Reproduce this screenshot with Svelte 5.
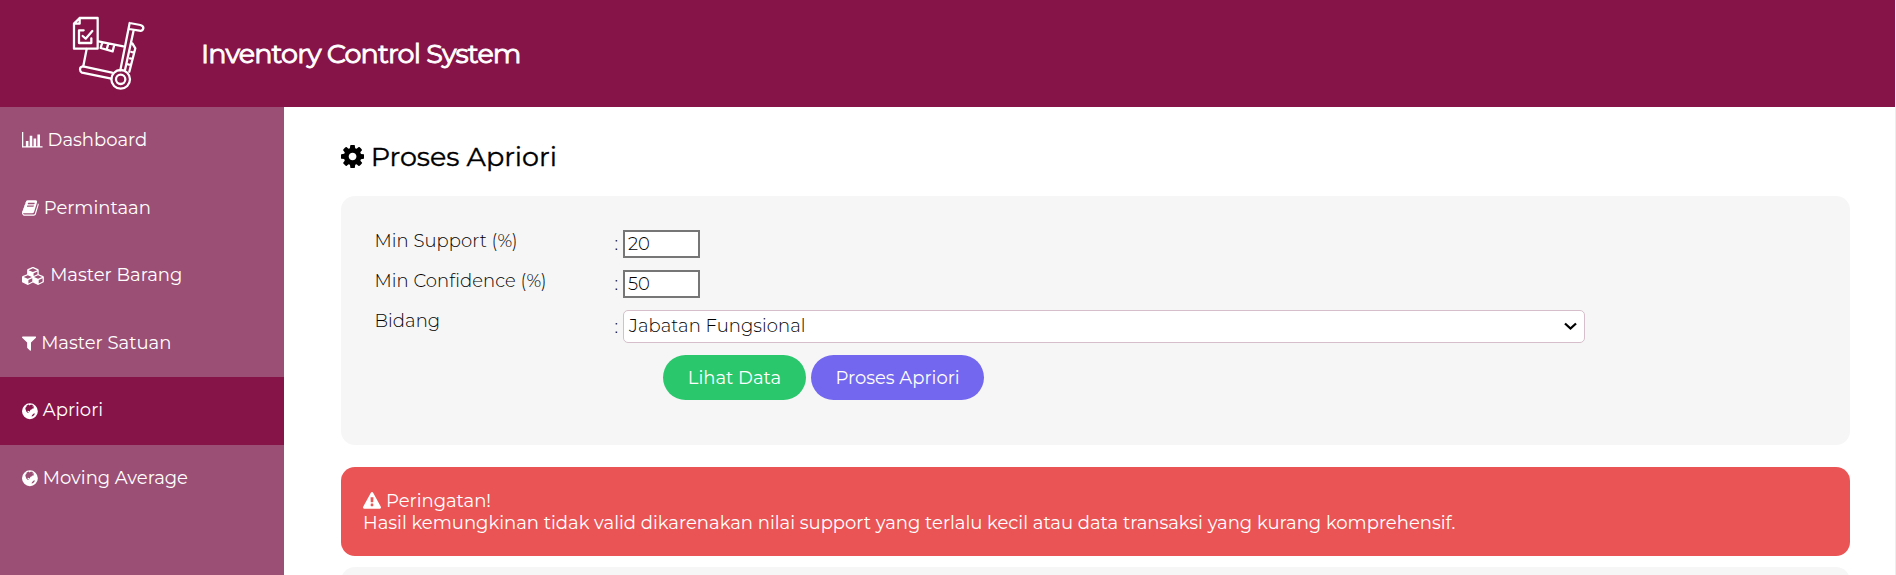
<script>
  const menu = [
    { label: 'Dashboard', icon: 'chart' },
    { label: 'Permintaan', icon: 'book' },
    { label: 'Master Barang', icon: 'cubes' },
    { label: 'Master Satuan', icon: 'filter' },
    { label: 'Apriori', icon: 'globe', active: true },
    { label: 'Moving Average', icon: 'globe' }
  ];

  const icons = {
    chart: { x: 0, w: 2048, d: 'M640 896v512h-256v-512h256zm384-512v1024h-256v-1024h256zm1024 1024v128h-2048v-1536h128v1408h1920zm-640-768v768h-256v-768h256zm384-384v1152h-256v-1152h256z' },
    book: { x: 64, w: 1664, d: 'M1703 478q40 57 18 129l-275 906q-19 64-76.500 107.500t-122.500 43.500h-923q-77 0-148.500-53.500t-99.500-131.500q-24-67-2-127 0-4 3-27t4-37q1-8-3-21.500t-3-19.500q2-11 8-21t16.500-23.500 16.500-23.500q23-38 45-91.500t30-91.500q3-10 .5-30t-.5-28q3-11 17-28t17-23q21-36 42-92t25-90q1-9-2.500-32t.5-28q4-13 22-30.500t22-22.500q19-26 42.500-84.500t27.500-96.500q1-8-3-25.500t-2-26.500q2-8 9-18t18-23 17-21q8-12 16.500-30.500t15-35 16-36 19.500-32 26.500-23.500 36-11.500 47.500 5.500l-1 3q38-9 51-9h761q74 0 114 56t18 130l-274 906q-36 119-71.500 153.500t-128.500 34.500h-869q-27 0-38 15-11 16-1 43 24 70 144 70h923q29 0 56-15.500t35-41.500l300-987q7-22 5-57 38 15 59 43zm-1064 2q-4 13 2 22.500t20 9.500h608q13 0 25.500-9.500t16.500-22.500l21-64q4-13-2-22.500t-20-9.500h-608q-13 0-25.500 9.500t-16.500 22.500zm-83 256q-4 13 2 22.500t20 9.500h608q13 0 25.500-9.500t16.500-22.500l21-64q4-13-2-22.500t-20-9.500h-608q-13 0-25.500 9.500t-16.500 22.500z' },
    cubes: { x: 0, w: 2304, d: 'M640 1632l384-192v-314l-384 164v342zm-64-454l404-173-404-173-404 173zm1088 454l384-192v-314l-384 164v342zm-64-454l404-173-404-173-404 173zm-448-293l384-165v-266l-384 164v267zm-64-379l441-189-441-189-441 189zm1088 518v416q0 36-19 67t-52 47l-448 224q-25 14-57 14t-57-14l-448-224q-4-2-7-4-2 2-7 4l-448 224q-25 14-57 14t-57-14l-448-224q-33-16-52-47t-19-67v-416q0-38 21.500-70t56.500-48l434-186v-400q0-38 21.500-70t56.500-48l448-192q23-10 50-10t50 10l448 192q35 16 56.500 48t21.500 70v400l434 186q36 16 57 48t21 70z' },
    filter: { x: 192, w: 1408, d: 'M1595 295q17 41-14 70l-493 493v742q0 42-39 59-13 5-25 5-27 0-45-19l-256-256q-19-19-19-45v-486l-493-493q-31-29-14-70 17-39 59-39h1280q42 0 59 39z' },
    globe: { x: 128, w: 1536, d: 'M896 128a768 768 0 1 1 0 1536a768 768 0 1 1 0-1536zM580 330L700 300L790 250L850 330L930 290L1010 250L1100 290L1180 270L1230 330L1130 370L1160 430L1260 420L1290 500L1230 560L1260 620L1180 660L1110 640L1060 720L960 760L900 840L910 900L850 920L780 860L690 850L650 920L730 960L780 1030L740 1070L640 1020L560 940L510 820L470 700L450 600L500 520L570 470L560 400ZM1210 1170L1310 1090L1370 1130L1340 1220L1240 1340L1100 1410L1050 1380L1100 1290Z' },
    cog: { x: 128, w: 1536, d: 'M1152 896q0-106-75-181t-181-75-181 75-75 181 75 181 181 75 181-75 75-181zm512-109v222q0 12-8 23t-20 13l-185 28q-19 54-39 91 35 50 107 138 10 12 10 25t-9 23q-27 37-99 108t-94 71q-12 0-26-9l-138-108q-44 23-91 38-16 136-29 186-7 28-36 28h-222q-14 0-24.500-8.500t-11.500-21.500l-28-184q-49-16-90-37l-141 107q-10 9-25 9-14 0-25-11-126-114-165-168-7-10-7-23 0-12 8-23 15-21 51-66.500t54-70.500q-27-50-41-99l-183-27q-13-2-21-12.500t-8-23.500v-222q0-12 8-23t19-13l186-28q14-46 39-92-40-57-107-138-10-12-10-24 0-10 9-23 26-36 98.500-107.500t94.500-71.500q13 0 26 10l138 107q44-23 91-38 16-136 29-186 7-28 36-28h222q14 0 24.500 8.500t11.500 21.500l28 184q49 16 90 37l142-107q9-9 24-9 13 0 25 10 129 119 165 170 7 8 7 22 0 12-8 23-15 21-51 66.500t-54 70.500q26 50 41 98l183 28q13 2 21 12.500t8 23.500z' },
    warning: { x: 0, w: 1792, d: 'M1024 1375v-190q0-14-9.500-23.500t-22.500-9.500h-192q-13 0-22.500 9.500t-9.500 23.500v190q0 14 9.500 23.500t22.500 9.500h192q13 0 22.500-9.500t9.500-23.500zm-2-374l18-459q0-12-10-19-13-11-24-11h-220q-11 0-24 11-10 7-10 21l17 457q0 10 10 16.500t24 6.500h185q14 0 23.500-6.500t10.500-16.500zm-14-934l768 1408q35 63-2 126-17 29-46.500 46t-63.500 17h-1536q-34 0-63.500-17t-46.500-46q-37-63-2-126l768-1408q17-31 47-49t65-18 65 18 47 49z' }
  };

  let support = $state('20');
  let confidence = $state('50');
</script>

{#snippet icon(name, size)}
  <svg class="icon" viewBox="{icons[name].x} 0 {icons[name].w} 1792" width={(icons[name].w / 1792) * size} height={size} aria-hidden="true">
    <path fill-rule="evenodd" d={icons[name].d} />
  </svg>
{/snippet}

<div class="page">
  <header>
    <svg class="logo" viewBox="0 0 240 240" aria-hidden="true">
      <path d="M29 12H83V104H12V29ZM29 12V29H12" />
      <path d="M41 49H27V87H64V73M38 66L47 74L67 51" />
      <path d="M85 82L160 97M50 105L40 156M97 85L92 102L128 112L133 92M115 89L110 107" />
      <path d="M179 27L151 169M179 27L211 33Q221 36 220 43Q218 52 208 50L177 45M191 49L165 168M187 88L196 103L178 173M184 114L192 116M180 133L188 135M174 151L182 153" />
      <path d="M126 176L39 157Q30 158 30 166Q30 173 36 176L124 194" />
      <circle cx="152" cy="196" r="28" />
      <circle cx="152" cy="196" r="14" />
    </svg>
    <h1>Inventory Control System</h1>
  </header>

  <div class="body">
    <nav>
      {#each menu as item}
        <a href="#top" class:active={item.active}>
          {@render icon(item.icon, item.icon === 'globe' ? 18.5 : 18)}
          <span>{item.label}</span>
        </a>
      {/each}
    </nav>

    <main>
      <h2>{@render icon('cog', 27)}<span>Proses Apriori</span></h2>

      <section class="panel">
        <label for="support">Min Support (%)</label>
        <span class="colon">:</span>
        <input id="support" bind:value={support} />
        <label for="confidence">Min Confidence (%)</label>
        <span class="colon">:</span>
        <input id="confidence" bind:value={confidence} />
        <span class="bidang">Bidang</span>
        <span class="colon">:</span>
        <div class="select">
          <span>Jabatan Fungsional</span>
          <svg width="15" height="9" viewBox="0 0 15 9" aria-hidden="true"><path d="M2 1.500L7.500 6.500L13 1.500" /></svg>
        </div>
        <div class="actions">
          <button class="view">Lihat Data</button>
          <button class="process">Proses Apriori</button>
        </div>
      </section>

      <section class="alert">
        <p class="alert-title">{@render icon('warning', 18)}<span>Peringatan!</span></p>
        <p class="alert-text">Hasil kemungkinan tidak valid dikarenakan nilai support yang terlalu kecil atau data transaksi yang kurang komprehensif.</p>
      </section>

      <section class="result"></section>
    </main>
  </div>
</div>

<style>
  :global(body) { overflow: hidden; }
  .page {
    height: 575px;
    display: flex;
    flex-direction: column;
    overflow: hidden;
    background: #fff;
    color: #000;
    font-family: Montserrat, Inter, sans-serif;
    font-size: 18px;
    box-sizing: border-box;
    border-right: 1px solid #ededed;
  }
  .page * { box-sizing: border-box; }
  header {
    flex: 0 0 107px;
    display: flex;
    align-items: center;
    gap: 51px;
    padding: 1px 0 0 70px;
    background: #861449;
    color: #fff;
  }
  .logo {
    width: 80px;
    height: 80px;
    fill: none;
    stroke: #fff;
    stroke-width: 6.8;
    stroke-linejoin: round;
    stroke-linecap: round;
  }
  h1, h2, p { margin: 0; }
  h1 {
    padding-bottom: 1px;
    font-size: 27px;
    font-weight: 400;
    letter-spacing: -0.88px;
    -webkit-text-stroke: 0.9px #fff;
  }
  .body { flex: 1; display: flex; min-height: 0; }
  nav { flex: 0 0 284px; background: #9b4f75; }
  nav a {
    display: flex;
    align-items: center;
    gap: 5px;
    height: 67.5px;
    padding-left: 22px;
    color: #fff;
    text-decoration: none;
  }
  nav a span { padding-bottom: 1px; white-space: nowrap; }
  nav a.active { background: #861449; }
  .icon { display: block; flex: none; fill: currentColor; }
  main { flex: 1; min-width: 0; padding: 0 45px 0 57px; }
  h2 {
    display: flex;
    align-items: center;
    gap: 6.5px;
    height: 89px;
    padding-top: 9px;
    font-size: 27px;
    font-weight: 400;
    -webkit-text-stroke: 0.35px #000;
  }
  h2 .icon, h2 :global(.icon) { stroke: none; }
  .panel {
    display: grid;
    grid-template-columns: 240px 9px 962px;
    grid-template-rows: 28px 28px 33px 45px;
    row-gap: 12px;
    height: 249px;
    padding: 34px 0 0 33px;
    border-radius: 14px;
    background: #f6f6f6;
    font-weight: 300;
    letter-spacing: 0.07px;
  }
  label, .bidang { padding-left: 0.5px; line-height: 23px; }
  .colon { align-self: center; padding-left: 0.5px; }
  input {
    width: 77px;
    height: 28px;
    padding: 0 0 1px 3px;
    border: 2px solid #767676;
    background: #fff;
    color: #000;
    font: inherit;
  }
  .select {
    display: flex;
    align-items: center;
    justify-content: space-between;
    padding: 0 6px 1px 5px;
    border: 1px solid #d6bfca;
    border-radius: 5px;
    background: #fff;
  }
  .select svg { fill: none; stroke: #000; stroke-width: 2.300; }
  .actions { grid-column: 1 / -1; display: flex; gap: 5px; padding-left: 289px; }
  button {
    height: 45px;
    padding: 0;
    border: 0;
    border-radius: 23px;
    color: #fff;
    font: inherit;
    font-weight: 400;
  }
  .view { width: 143px; background: #2ac76d; }
  .process { width: 173px; background: #7367ef; }
  .alert {
    display: flex;
    flex-direction: column;
    justify-content: center;
    height: 89px;
    margin: 22px 0 11px;
    padding-left: 22px;
    border-radius: 14px;
    background: #ea5455;
    color: #fff;
    line-height: 22px;
  }
  .alert-title { display: flex; align-items: center; gap: 5px; }
  .alert-text { white-space: nowrap; }
  .result { height: 60px; border-radius: 14px; background: #f6f6f6; }
</style>
